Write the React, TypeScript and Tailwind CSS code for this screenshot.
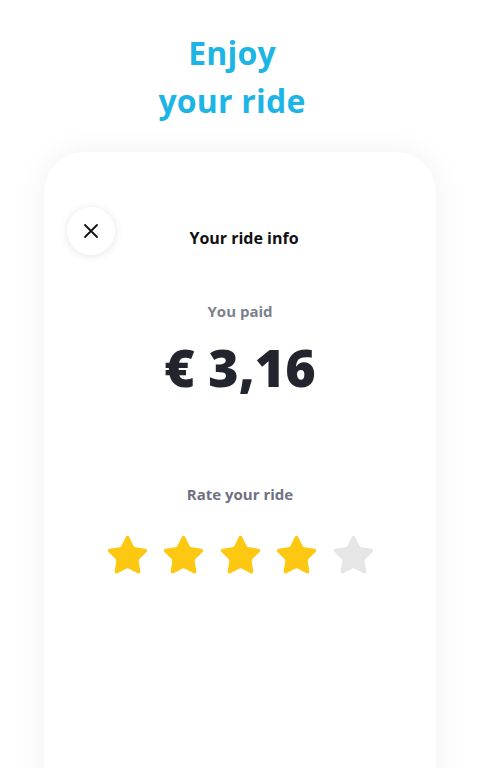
import React from "react";

const STAR =
  "M11.525 2.295a.53.53 0 0 1 .95 0l2.31 4.679a2.123 2.123 0 0 0 1.595 1.16l5.166.756a.53.53 0 0 1 .294.904l-3.736 3.638a2.123 2.123 0 0 0-.611 1.878l.882 5.14a.53.53 0 0 1-.771.56l-4.618-2.428a2.122 2.122 0 0 0-1.973 0L6.396 21.01a.53.53 0 0 1-.77-.56l.881-5.139a2.122 2.122 0 0 0-.611-1.879L2.16 9.795a.53.53 0 0 1 .294-.906l5.165-.755a2.122 2.122 0 0 0 1.597-1.16z";

function Star({ color }: { color: string }) {
  return (
    <svg width="45" height="45" viewBox="0 0 24 24">
      <path d={STAR} fill={color} stroke={color} strokeWidth="1" strokeLinejoin="round" />
    </svg>
  );
}

export default function App() {
  const font = { fontFamily: '"Open Sans", "Noto Sans", sans-serif' };
  return (
    <div className="w-[480px] h-[768px] overflow-hidden bg-white flex flex-col items-center" style={font}>
      <div className="pt-[29px] pr-[16px] text-center text-[32px] leading-[48px] font-bold text-[#1db4e6] tracking-[0.2px]">
        <div>Enjoy</div>
        <div>your ride</div>
      </div>
      <div className="mt-[27px] w-[392px] h-[700px] shrink-0 rounded-[40px] bg-white shadow-[0_0_32px_rgba(0,0,0,0.06)] relative flex flex-col items-center">
        <button className="absolute left-[23px] top-[55px] w-[48px] h-[48px] rounded-full bg-white shadow-[0_1px_8px_rgba(0,0,0,0.10)] flex items-center justify-center">
          <svg width="16" height="16" viewBox="0 0 16 16">
            <path d="M2 2 L14 14 M14 2 L2 14" stroke="#111" strokeWidth="1.8" strokeLinecap="round" />
          </svg>
        </button>
        <div className="mt-[74px] ml-[8px] text-[16px] leading-[24px] font-bold text-[#111]">Your ride info</div>
        <div className="mt-[51px] text-[15px] leading-[20px] font-bold text-[#7c7f8c]">You paid</div>
        <div className="mt-[16px] text-[52px] leading-[60px] font-extrabold text-[#22252e]">€ 3,16</div>
        <div className="mt-[87px] text-[15px] leading-[20px] font-bold text-[#6e7180]">Rate your ride</div>
        <div className="mt-[29px] flex items-center gap-[11.5px]">
          <Star color="#fdc812" />
          <Star color="#fdc812" />
          <Star color="#fdc812" />
          <Star color="#fdc812" />
          <Star color="#e6e6e6" />
        </div>
      </div>
    </div>
  );
}
